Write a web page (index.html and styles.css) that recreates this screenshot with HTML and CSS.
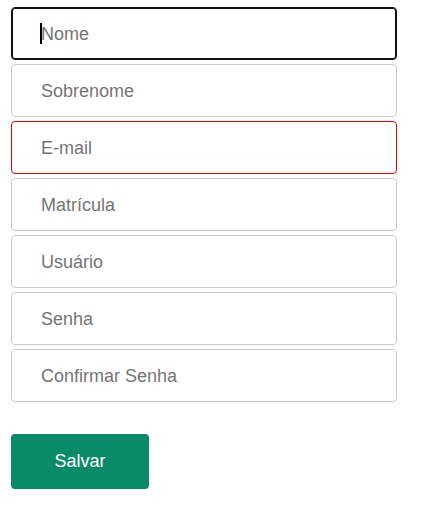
FILE: index.html
```html
<!DOCTYPE html>
<html lang="pt-BR">
<head>
<meta charset="utf-8">
<title>Cadastro</title>
<link rel="stylesheet" href="styles.css">
</head>
<body>
<form class="signup">
  <div class="fields">
    <div class="focus-wrap">
      <input class="field is-focused" type="text" placeholder="Nome">
      <span class="caret" aria-hidden="true"></span>
    </div>
    <input class="field" type="text" placeholder="Sobrenome">
    <input class="field is-invalid" type="email" placeholder="E-mail">
    <input class="field" type="text" placeholder="Matrícula">
    <input class="field" type="text" placeholder="Usuário">
    <input class="field" type="password" placeholder="Senha">
    <input class="field" type="password" placeholder="Confirmar Senha">
  </div>
  <button class="save" type="button">Salvar</button>
</form>
</body>
</html>
```
FILE: styles.css
```css
html, body {
  margin: 0;
  padding: 0;
  background: #ffffff;
  font-family: "Liberation Sans", Arial, sans-serif;
}

.signup {
  padding: 7px 0 0 11px;
  width: 386px;
}

.fields {
  display: flex;
  flex-direction: column;
  gap: 4px;
}

.focus-wrap {
  position: relative;
  display: flex;
}

.caret {
  position: absolute;
  left: 29px;
  top: 16px;
  width: 2px;
  height: 21px;
  background: #000000;
}

.field {
  box-sizing: border-box;
  width: 386px;
  height: 53px;
  margin: 0;
  padding: 2px 28px 0 29px;
  border: 1px solid #cccccc;
  border-radius: 4px;
  background: #ffffff;
  font-family: "Liberation Sans", Arial, sans-serif;
  font-size: 18px;
  color: #333333;
  outline: none;
}

.field::placeholder {
  color: #757575;
  opacity: 1;
}

.field.is-focused {
  border-color: #111111;
  box-shadow: 0 0 0 1px #111111 inset;
}

.field.is-invalid {
  border-color: #e60000;
}

.save {
  display: block;
  box-sizing: border-box;
  width: 138px;
  height: 55px;
  margin: 32px 0 0 0;
  padding: 0;
  border: none;
  border-radius: 4px;
  background: #0b8a69;
  color: #ffffff;
  font-family: "Liberation Sans", Arial, sans-serif;
  font-size: 18px;
  cursor: pointer;
}
```
